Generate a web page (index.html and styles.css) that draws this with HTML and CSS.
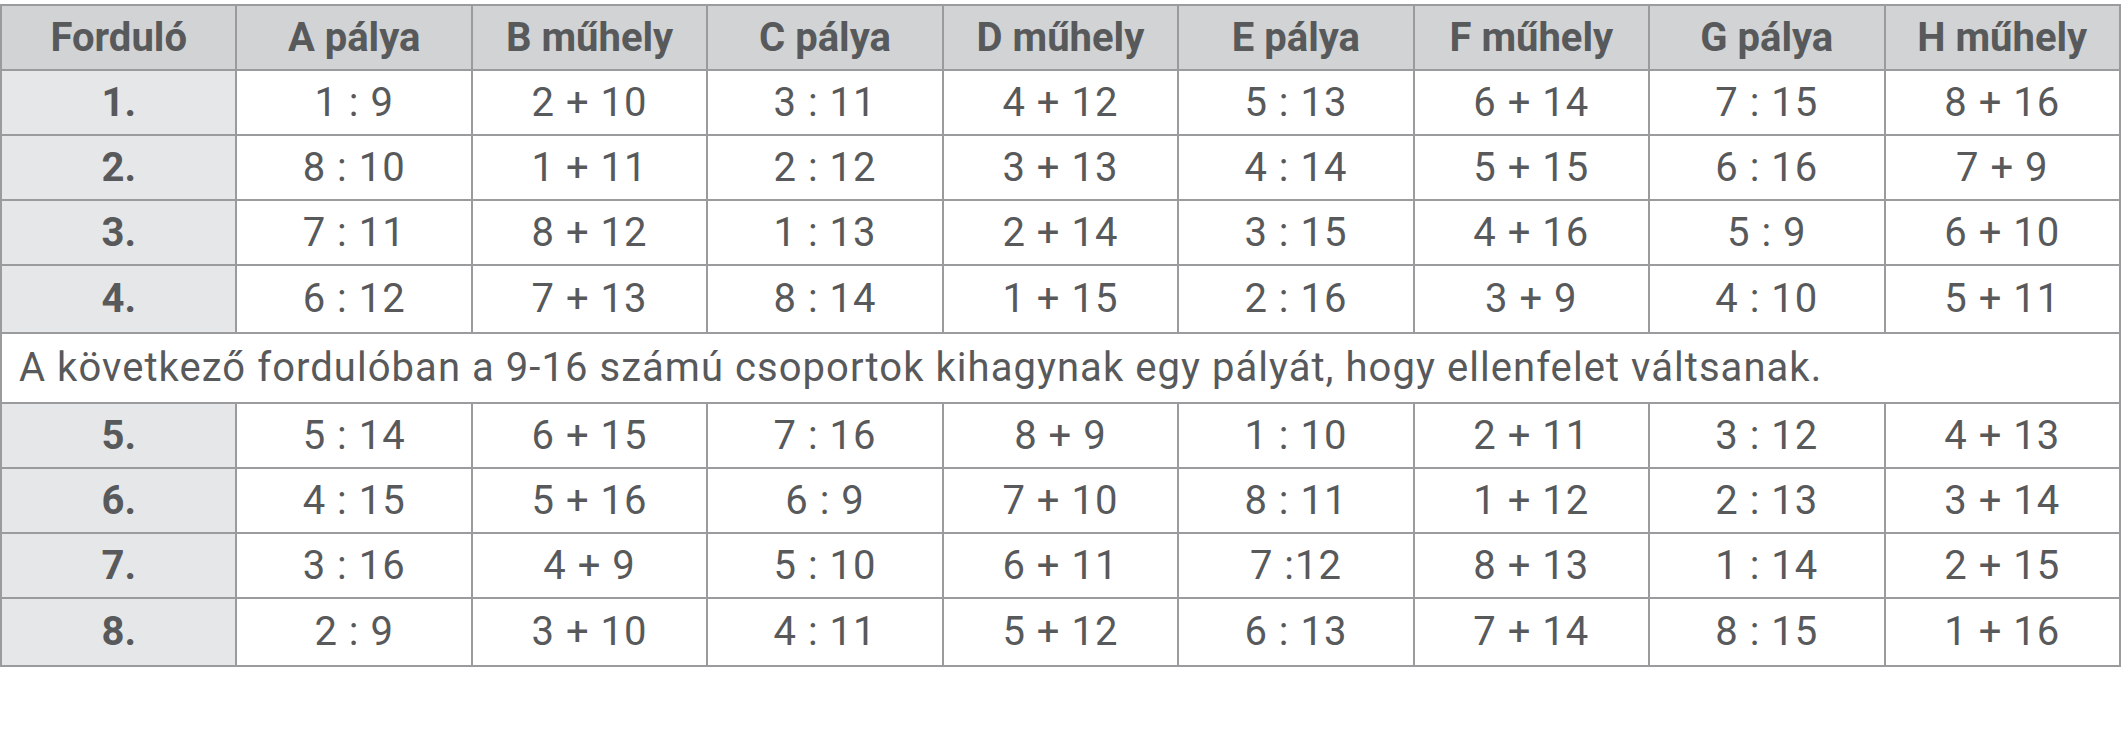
FILE: index.html
```html
<!DOCTYPE html>
<html lang="hu">
<head>
<meta charset="utf-8">
<title>Forduló</title>
<link rel="stylesheet" href="styles.css">
</head>
<body>
<table class="schedule">
  <colgroup>
    <col><col><col><col><col><col><col><col><col>
  </colgroup>
  <thead>
    <tr class="head">
      <th>Forduló</th><th>A pálya</th><th>B műhely</th><th>C pálya</th><th>D műhely</th><th>E pálya</th><th>F műhely</th><th>G pálya</th><th>H műhely</th>
    </tr>
  </thead>
  <tbody>
    <tr><th>1.</th><td>1 : 9</td><td>2 + 10</td><td>3 : 11</td><td>4 + 12</td><td>5 : 13</td><td>6 + 14</td><td>7 : 15</td><td>8 + 16</td></tr>
    <tr><th>2.</th><td>8 : 10</td><td>1 + 11</td><td>2 : 12</td><td>3 + 13</td><td>4 : 14</td><td>5 + 15</td><td>6 : 16</td><td>7 + 9</td></tr>
    <tr><th>3.</th><td>7 : 11</td><td>8 + 12</td><td>1 : 13</td><td>2 + 14</td><td>3 : 15</td><td>4 + 16</td><td>5 : 9</td><td>6 + 10</td></tr>
    <tr class="tall"><th>4.</th><td>6 : 12</td><td>7 + 13</td><td>8 : 14</td><td>1 + 15</td><td>2 : 16</td><td>3 + 9</td><td>4 : 10</td><td>5 + 11</td></tr>
    <tr class="note"><td colspan="9">A következő fordulóban a 9-16 számú csoportok kihagynak egy pályát, hogy ellenfelet váltsanak.</td></tr>
    <tr><th>5.</th><td>5 : 14</td><td>6 + 15</td><td>7 : 16</td><td>8 + 9</td><td>1 : 10</td><td>2 + 11</td><td>3 : 12</td><td>4 + 13</td></tr>
    <tr><th>6.</th><td>4 : 15</td><td>5 + 16</td><td>6 : 9</td><td>7 + 10</td><td>8 : 11</td><td>1 + 12</td><td>2 : 13</td><td>3 + 14</td></tr>
    <tr><th>7.</th><td>3 : 16</td><td>4 + 9</td><td>5 : 10</td><td>6 + 11</td><td>7 :12</td><td>8 + 13</td><td>1 : 14</td><td>2 + 15</td></tr>
    <tr class="tall"><th>8.</th><td>2 : 9</td><td>3 + 10</td><td>4 : 11</td><td>5 + 12</td><td>6 : 13</td><td>7 + 14</td><td>8 : 15</td><td>1 + 16</td></tr>
  </tbody>
</table>
</body>
</html>
```

FILE: styles.css
```css
html, body {
  margin: 0;
  padding: 0;
  background: #ffffff;
}

body {
  padding-top: 4px;
  font-family: "Roboto", "Liberation Sans", sans-serif;
  color: #58595b;
}

.schedule {
  width: 2121px;
  table-layout: fixed;
  border-collapse: collapse;
  border: 2px solid #9a9b9c;
}

.schedule th,
.schedule td {
  border: 2px solid #9a9b9c;
  text-align: center;
  vertical-align: middle;
  padding: 0;
  font-size: 40px;
  line-height: 1;
  height: 63px;
}

.schedule td {
  font-weight: 400;
  letter-spacing: 1px;
}

.schedule th {
  font-weight: 700;
  background: #e6e7e8;
}

.schedule .head th {
  background: #d1d3d4;
  height: 63px;
}

.schedule .tall th,
.schedule .tall td {
  height: 66px;
}

.schedule .note td {
  text-align: left;
  padding-left: 17px;
  height: 68px;
  letter-spacing: 1.05px;
}
```
